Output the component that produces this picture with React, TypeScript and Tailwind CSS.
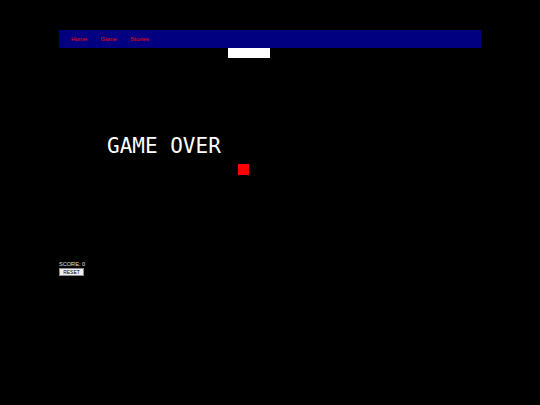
export default function App() {
  const links = ["Home", "Game", "Stories"];

  return (
    <div className="min-h-[405px] bg-black pt-[30px] font-['Liberation_Sans',Arial,sans-serif]">
      <div className="mx-auto w-[422px]">
        <nav className="flex h-[18px] items-center gap-[13.5px] bg-[#000080] pl-[12px]">
          {links.map((link) => (
            <a key={link} href="#" className="text-[6px] leading-none text-[#ff0000]">
              {link}
            </a>
          ))}
        </nav>

        {/* game board */}
        <div className="relative h-[213px]">
          <div className="absolute left-[169px] top-0 h-[10px] w-[42px] bg-white" />
          <div className="absolute left-[48px] top-[88px] font-['DejaVu_Sans_Mono',monospace] text-[21px] leading-none text-white">
            GAME OVER
          </div>
          <div className="absolute left-[179px] top-[116px] h-[11px] w-[11px] bg-[#ff0000]" />
        </div>

        <div className="text-[5.6px] leading-[6px] text-[#e0e0e0]">SCORE: 0</div>
        <button className="mt-[1px] flex h-[8px] w-[25px] items-center justify-center border border-[#888] bg-[#f0f0f0] text-[5px] leading-none text-black">
          RESET
        </button>
      </div>
    </div>
  );
}
